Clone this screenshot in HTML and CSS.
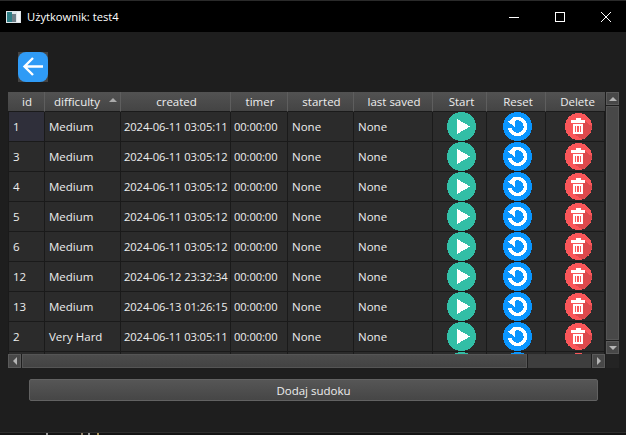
FILE: index.html
```html
<!DOCTYPE html>
<html lang="pl">
<head>
  <meta charset="UTF-8" />
  <meta name="viewport" content="width=device-width, initial-scale=1.0" />
  <title>Użytkownik: test4</title>
  <link rel="stylesheet" href="styles.css">
</head>
<body>
  <svg class="defs" aria-hidden="true">
    <symbol id="icon-start" viewBox="0 0 29 29">
      <circle cx="14.5" cy="14.5" r="14.5" fill="#32bea6" />
      <path d="M10 7 L23 14.5 L10 22 Z" fill="#fff" />
    </symbol>
    <symbol id="icon-reset" viewBox="0 0 29 29">
      <circle cx="14.5" cy="14.5" r="14.5" fill="#0a96ff" />
      <path d="M10.5 7.6 A8 8 0 1 1 6.6 16" fill="none" stroke="#fff" stroke-width="3.5" />
      <path d="M11.5 4.5 L11.5 14.5 L5 9.8 Z" fill="#fff" />
    </symbol>
    <symbol id="icon-delete" viewBox="0 0 27 27">
      <circle cx="13.5" cy="13.5" r="13.5" fill="#fa5659" />
      <path d="M8 20 L20 8 L27 13.5 A13.5 13.5 0 0 1 17 26.5 Z" fill="#dc494c" />
      <path d="M6 7 H10.5 V5 H15.5 V7 H20 V9.5 H6 Z" fill="#fff" />
      <path d="M7.5 10.5 H18.5 L18 21 H8 Z" fill="#fff" />
      <path d="M10.5 12.5 V19 M13 12.5 V19 M15.5 12.5 V19" stroke="#fa5659" stroke-width="1.2" />
    </symbol>
  </svg>

  <header class="titlebar">
    <svg class="app-icon" width="15" height="12" viewBox="0 0 15 12">
      <rect width="15" height="12" fill="#dfe6ea" />
      <rect x="1" y="1" width="5" height="10" fill="#2f7f86" />
      <rect x="6" y="3" width="4" height="8" fill="#6f7f88" />
      <rect x="11" y="1" width="3" height="10" fill="#f4f6f7" />
    </svg>
    <span class="title">Użytkownik: test4</span>
    <div class="window-controls">
      <svg width="10" height="10" viewBox="0 0 10 10"><path d="M0 5.5 H10" stroke="#fff" /></svg>
      <svg width="10" height="10" viewBox="0 0 10 10"><rect x="0.5" y="0.5" width="9" height="9" fill="none" stroke="#fff" /></svg>
      <svg width="10" height="10" viewBox="0 0 10 10"><path d="M0 0 L10 10 M10 0 L0 10" stroke="#fff" /></svg>
    </div>
  </header>

  <main class="content">
    <button class="back-button" aria-label="Wstecz">
      <svg width="30" height="30" viewBox="0 0 30 30">
        <rect width="30" height="30" rx="8" fill="#2f9bf6" />
        <path d="M25 14.5 H7 M15 6 L6.5 14.5 L15 23" fill="none" stroke="#fff" stroke-width="2.4" />
      </svg>
    </button>

    <div class="table-frame">
      <div class="table-top">
        <div class="table-view">
          <table class="games">
            <colgroup>
              <col class="col-id"><col class="col-difficulty"><col class="col-created"><col class="col-timer"><col class="col-started"><col class="col-saved"><col class="col-start"><col class="col-reset"><col class="col-delete">
            </colgroup>
            <thead>
              <tr>
                <th>id</th>
                <th class="sorted">difficulty<span class="sort-arrow"></span></th>
                <th>created</th><th>timer</th><th>started</th><th>last saved</th><th>Start</th><th>Reset</th><th>Delete</th>
              </tr>
            </thead>
            <tbody id="rows"></tbody>
          </table>
        </div>
        <div class="vscroll">
          <div class="scroll-btn"><span class="arrow-up"></span></div>
          <div class="vhandle"></div>
          <div class="scroll-btn"><span class="arrow-down"></span></div>
        </div>
      </div>
      <div class="hscroll">
        <div class="scroll-btn"><span class="arrow-left"></span></div>
        <div class="hhandle"></div>
        <div class="htrack"></div>
        <div class="scroll-btn"><span class="arrow-right"></span></div>
        <div class="corner"></div>
      </div>
    </div>

    <button class="add-button">Dodaj sudoku</button>
  </main>

  <div class="window-edge"></div>

  <script src="rows.js"></script>
</body>
</html>
```

FILE: rows.js
```js
const games = [
  ["1", "Medium", "2024-06-11 03:05:11"],
  ["3", "Medium", "2024-06-11 03:05:12"],
  ["4", "Medium", "2024-06-11 03:05:12"],
  ["5", "Medium", "2024-06-11 03:05:12"],
  ["6", "Medium", "2024-06-11 03:05:12"],
  ["12", "Medium", "2024-06-12 23:32:34"],
  ["13", "Medium", "2024-06-13 01:26:15"],
  ["2", "Very Hard", "2024-06-11 03:05:11"]
];

const rows = document.getElementById("rows");

function iconCell(name, size) {
  return `<td class="icon-cell"><svg class="icon-${name}" width="${size}" height="${size}" shape-rendering="crispEdges"><use href="#icon-${name}" /></svg></td>`;
}

function iconCells() {
  return iconCell("start", 29) + iconCell("reset", 29) + iconCell("delete", 27);
}

games.forEach((game, index) => {
  const row = document.createElement("tr");
  row.innerHTML =
    `<td class="id-cell${index === 0 ? " current" : ""}">${game[0]}</td>` +
    `<td>${game[1]}</td><td class="digits">${game[2]}</td>` +
    `<td class="digits">00:00:00</td><td>None</td><td>None</td>` +
    iconCells();
  rows.appendChild(row);
});

// next row, only the tops of its icons show above the scrollbar
const partial = document.createElement("tr");
partial.innerHTML = `<td class="id-cell"></td><td></td><td></td><td></td><td></td><td></td>` + iconCells();
rows.appendChild(partial);
```

FILE: styles.css
```css
* {
  box-sizing: border-box;
}

html, body {
  height: 100%;
}

body {
  display: flex;
  flex-direction: column;
  margin: 0;
  overflow: hidden;
  background: #1e1e1e;
  color: #eee;
  font-family: "Open Sans", "Noto Sans", sans-serif;
  font-size: 11.5px;
}

.defs {
  display: none;
}

/* title bar */
.titlebar {
  display: flex;
  flex: none;
  align-items: center;
  height: 32px;
  padding: 0 15px 0 6px;
  background: #000;
  border-top: 1px solid #2a2a2a;
  color: #fff;
}

.app-icon {
  margin-right: 6px;
}

.title {
  flex: 1;
  font-size: 11.2px;
}

.window-controls {
  display: flex;
  gap: 36px;
}

.window-controls svg {
  display: block;
}

/* page */
.content {
  flex: 1;
  padding: 20px 0 0 8px;
}

.back-button {
  display: block;
  width: 30px;
  height: 30px;
  margin: 0 0 10px 10px;
  padding: 0;
  border: 0;
  background: #444;
}

.back-button svg {
  display: block;
}

.table-frame {
  width: 611px;
}

.table-top {
  display: flex;
  height: 262px;
}

.table-view {
  width: 597px;
  margin-right: 1px;
  overflow: hidden;
}

.games {
  width: 597px;
  table-layout: fixed;
  border-collapse: separate;
  border-spacing: 0;
}

.col-id { width: 37px; }
.col-difficulty { width: 76px; }
.col-created { width: 110px; }
.col-timer { width: 57px; }
.col-started { width: 66px; }
.col-saved { width: 79px; }
.col-start { width: 54px; }
.col-reset { width: 59px; }
.col-delete { width: 59px; }

.games th {
  position: relative;
  height: 20px;
  padding: 1px 0 0 2px;
  background: linear-gradient(#525252, #444);
  border-right: 1px solid #5e5e5e;
  border-bottom: 1px solid #1a1a1a;
  color: #eee;
  font-weight: 400;
  line-height: 18px;
}

.games th.sorted {
  padding: 1px 11px 0 0;
}

.games th:nth-last-child(-n+3) {
  padding-left: 4px;
}

.games th:last-child {
  border-right: 0;
}

.sort-arrow {
  position: absolute;
  top: 6px;
  right: 3px;
  border: 4px solid transparent;
  border-top: 0;
  border-bottom: 4px solid #aaa;
}

.games td {
  height: 30px;
  padding: 0 0 0 4px;
  background: #2b2b2b;
  border-right: 1px solid #1a1a1a;
  border-bottom: 1px solid #1a1a1a;
  white-space: nowrap;
  overflow: hidden;
  line-height: 28px;
}

.games td.id-cell {
  border-left: 1px solid #1a1a1a;
  padding-left: 4px;
}

.games td.current {
  background: #2f2f3a;
}

.games td.digits {
  padding-left: 3px;
  font-size: 11.2px;
  letter-spacing: -0.1px;
}

.games td.icon-cell {
  padding: 0;
  line-height: 0;
}

.icon-cell svg {
  display: block;
}

.icon-cell .icon-start {
  margin-left: 14px;
}

.icon-cell .icon-reset {
  margin-left: 16px;
}

.icon-cell .icon-delete {
  margin-left: 19px;
}

/* scrollbars */
.scroll-btn {
  display: flex;
  align-items: center;
  justify-content: center;
  flex: none;
  width: 13px;
  height: 13px;
  background: #484848;
  border: 1px solid #5a5a5a;
}

.arrow-up, .arrow-down, .arrow-left, .arrow-right {
  border: 4px solid transparent;
}

.arrow-up {
  border-top: 0;
  border-bottom-color: #b5b5b5;
}

.arrow-down {
  border-bottom: 0;
  border-top-color: #b5b5b5;
}

.arrow-left {
  border-left: 0;
  border-right-color: #b5b5b5;
}

.arrow-right {
  border-right: 0;
  border-left-color: #b5b5b5;
}

.vscroll {
  display: flex;
  flex-direction: column;
  gap: 1px;
  width: 13px;
}

.vhandle {
  flex: 1;
  background: #484848;
  border: 1px solid #555;
}

.hscroll {
  display: flex;
  height: 14px;
  gap: 1px;
}

.hscroll .scroll-btn {
  height: 14px;
}

.hhandle {
  width: 505px;
  background: linear-gradient(#4c4c4c, #434343);
  border: 1px solid #555;
}

.htrack {
  width: 63px;
  background: #3e3e3e;
}

.corner {
  width: 13px;
  background: #242424;
}

.add-button {
  display: block;
  width: 569px;
  height: 22px;
  margin: 11px 0 0 21px;
  padding: 0;
  background: linear-gradient(#565656, #464646);
  border: 1px solid #626262;
  border-radius: 2px;
  color: #eee;
  font: inherit;
}

/* edge of the window, with what lies behind it */
.window-edge {
  flex: none;
  height: 3px;
  border-top: 1px solid #2e2e2e;
  background: linear-gradient(to right,
    #141414 46px, #9a9a9a 46px 48px,
    #141414 48px 81px, #8f8068 81px 83px,
    #141414 83px 88px, #9a9a9a 88px 90px,
    #141414 90px 97px, #a8925a 97px 99px,
    #141414 99px);
}
```
